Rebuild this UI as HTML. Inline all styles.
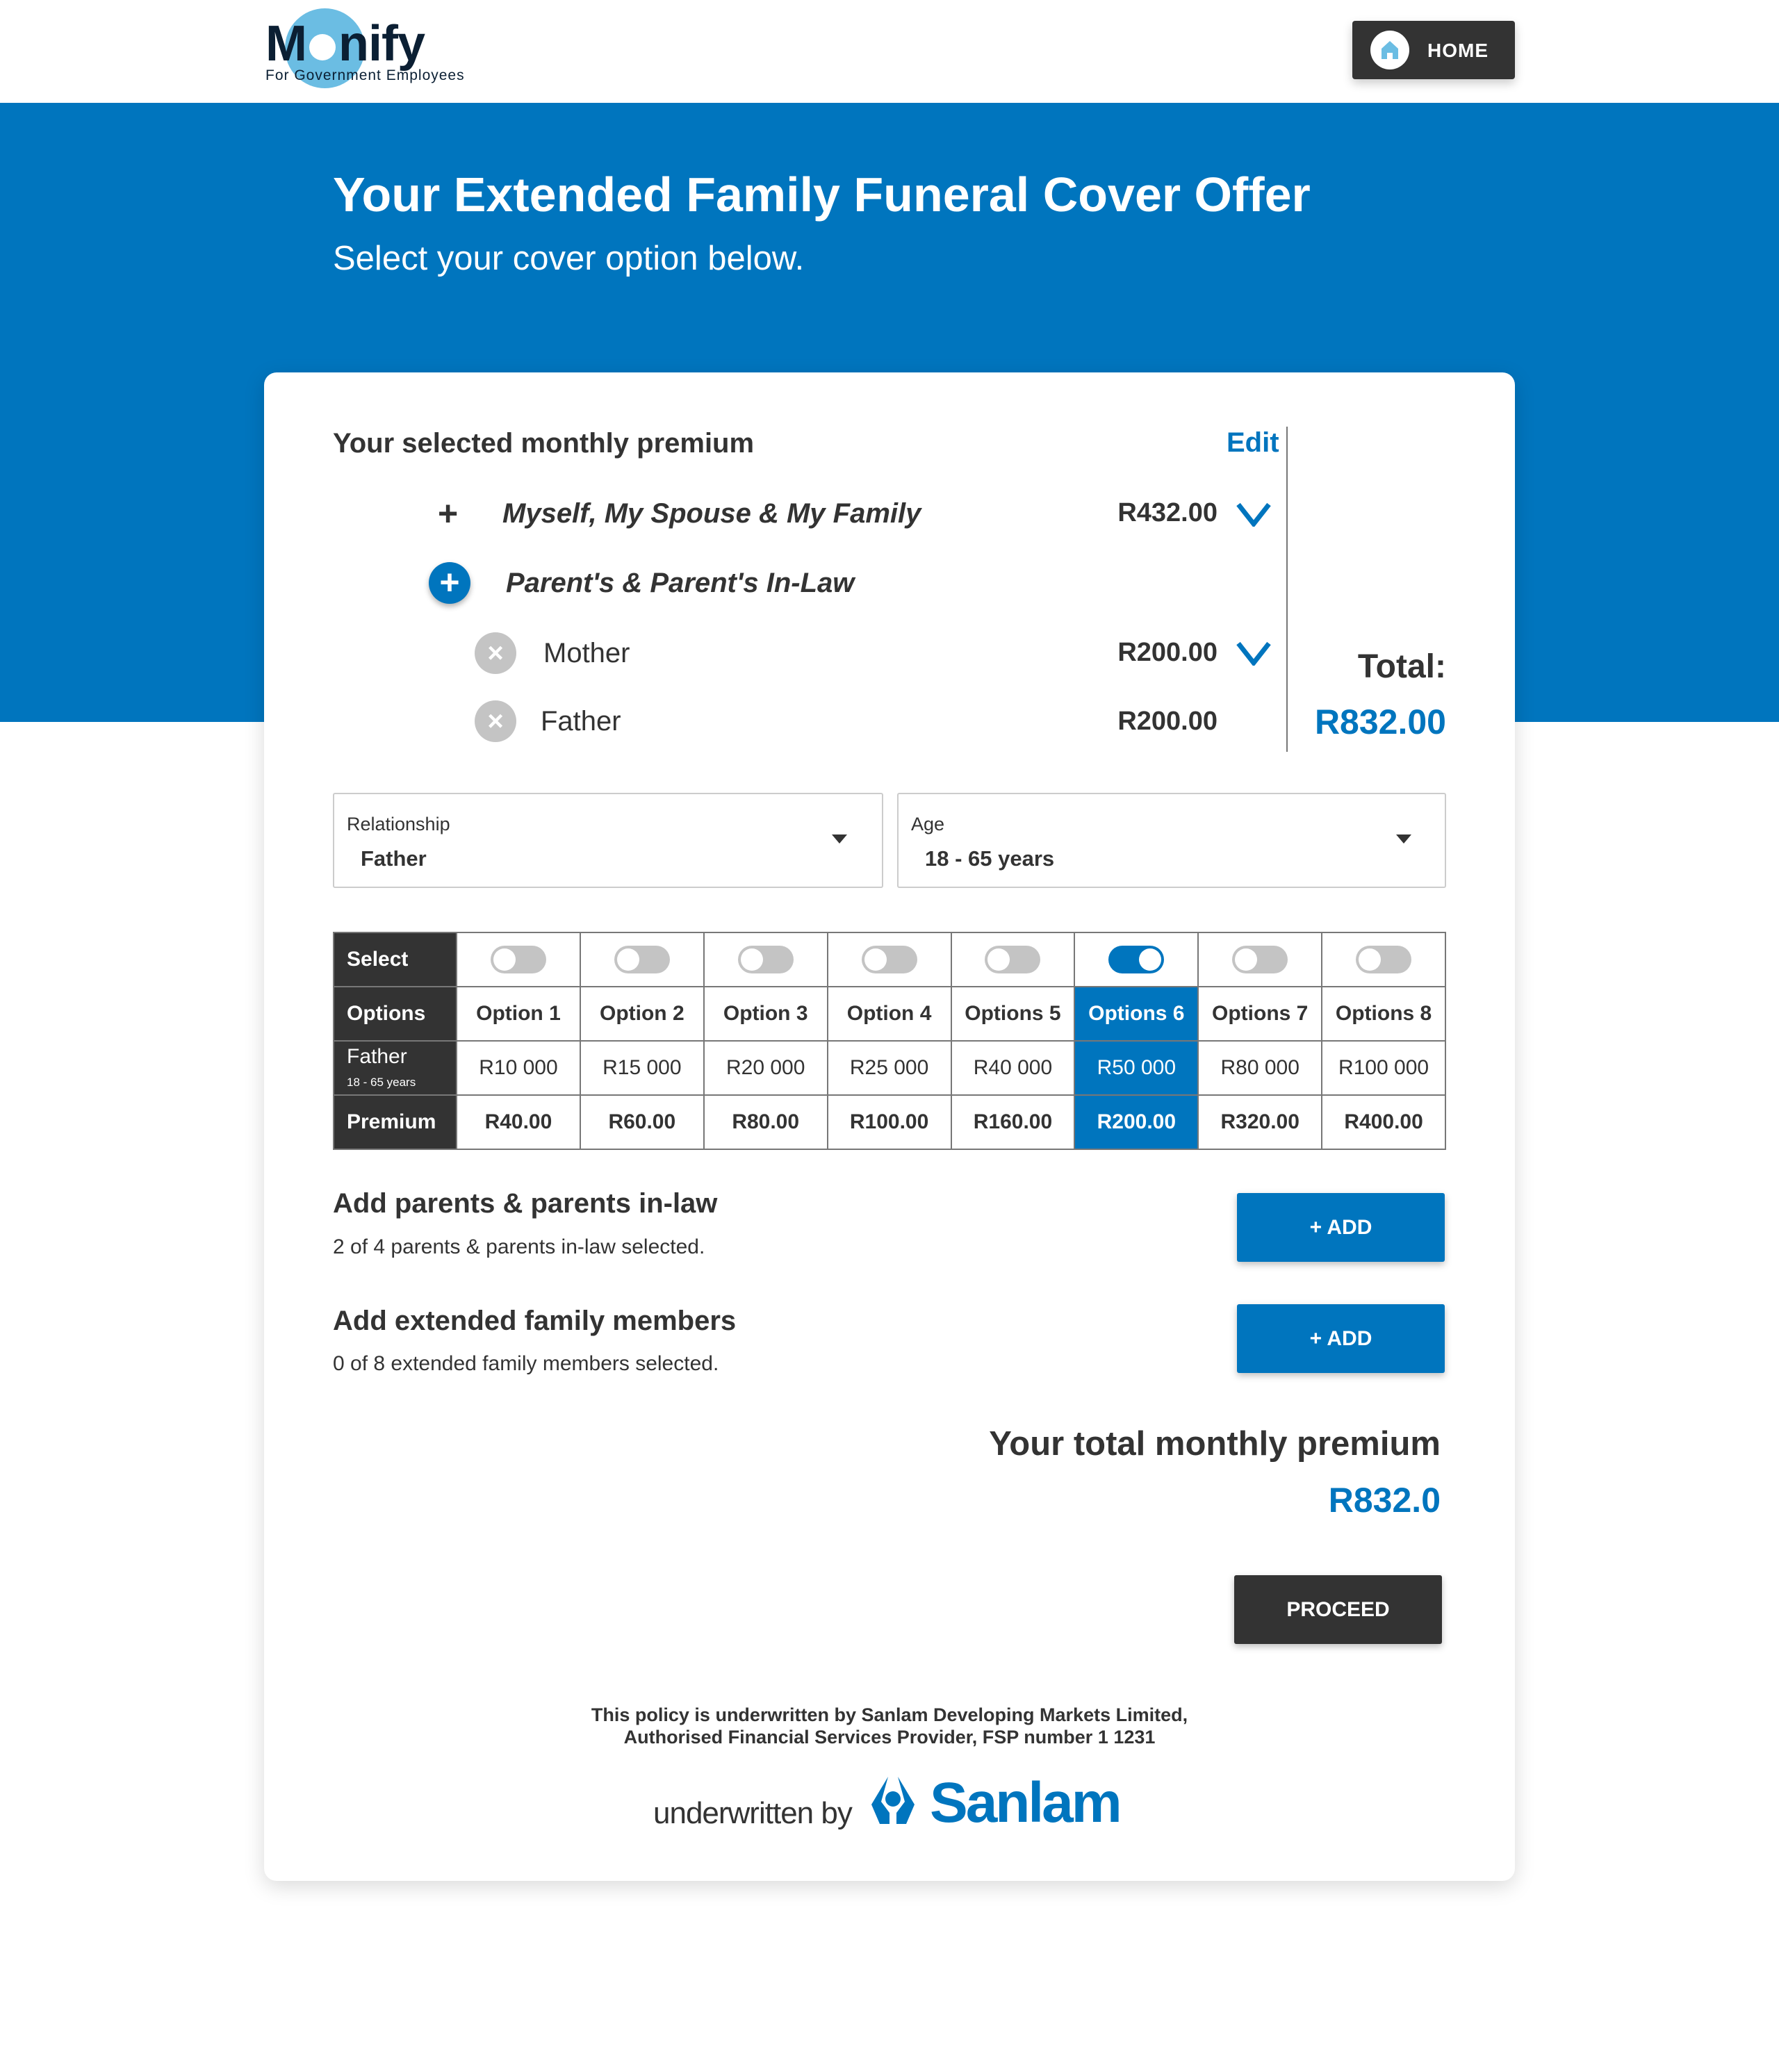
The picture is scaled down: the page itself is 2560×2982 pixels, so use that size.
<!DOCTYPE html>
<html><head><meta charset="utf-8"><style>
*{margin:0;padding:0;box-sizing:border-box}
body{width:2560px;height:2982px;background:#fff;font-family:"Liberation Sans",sans-serif;color:#333;position:relative;overflow:hidden}
.a{position:absolute;white-space:nowrap}
.band{position:absolute;left:0;top:148px;width:2560px;height:891px;background:#0075be}
.card{position:absolute;left:380px;top:536px;width:1800px;height:2171px;background:#fff;border-radius:18px;box-shadow:0 8px 30px rgba(0,0,0,.15)}
.blue{color:#0075be}
table{position:absolute;left:479px;top:1341px;width:1602px;border-collapse:collapse;font-size:30px;table-layout:fixed}
td{border:2px solid #777;height:78px;text-align:center;color:#333}
td.h{background:#333;color:#fff;text-align:left;padding-left:18px;font-weight:bold}
td.s{background:#0075be;color:#fff}
.tg{display:inline-block;width:80px;height:40px;border-radius:20px;background:#c4c4c4;position:relative;vertical-align:middle}
.tg:after{content:"";position:absolute;left:4px;top:4px;width:32px;height:32px;border-radius:50%;background:#fff}
.tg.on{background:#0075be}.tg.on:after{left:44px}
.btn{position:absolute;display:flex;align-items:center;justify-content:center;color:#fff;font-weight:bold;font-size:30px;box-shadow:0 4px 10px rgba(0,0,0,.25);border-radius:3px}
.sel{position:absolute;top:1141px;height:137px;border:2px solid #ccc;border-radius:3px}
.x{position:absolute;width:60px;height:60px;border-radius:50%;background:#c4c4c4;color:#fff;font-size:40px;font-weight:bold;text-align:center;line-height:60px}
</style></head><body>
<div class="a" style="left:410px;top:12px;width:115px;height:115px;border-radius:50%;background:#6bbde3"></div>
<div class="a" style="left:382px;top:22px;font-size:72px;font-weight:bold;color:#0b1f33;letter-spacing:-1px">M<span style="display:inline-block;width:38px;height:38px;border-radius:50%;background:#fff;margin:0 4px"></span>nify</div>
<div class="a" style="left:382px;top:97px;font-size:21px;color:#0b1f33;letter-spacing:1px">For Government Employees</div>
<div class="a" style="left:1946px;top:30px;width:234px;height:84px;background:#333;border-radius:4px;box-shadow:0 6px 14px rgba(0,0,0,.2)">
<div class="a" style="left:26px;top:14px;width:56px;height:56px;border-radius:50%;background:#fff"><svg width="56" height="56" viewBox="0 0 56 56"><path d="M16 26 L28 15 L40 26 V41 H32 V32 H24 V41 H16Z" fill="#6bbde3"/></svg></div>
<div class="a" style="left:108px;top:27px;color:#fff;font-size:28px;font-weight:bold;letter-spacing:1px">HOME</div></div>
<div class="band"></div>
<div class="a" style="left:479px;top:240px;font-size:70px;font-weight:bold;color:#fff">Your Extended Family Funeral Cover Offer</div>
<div class="a" style="left:479px;top:344px;font-size:49px;color:#fff">Select your cover option below.</div>
<div class="card"></div>
<div class="a" style="left:479px;top:616px;font-size:40px;font-weight:bold">Your selected monthly premium</div>
<div class="a blue" style="left:1765px;top:615px;font-size:40px;font-weight:bold">Edit</div>
<div class="a" style="left:1851px;top:614px;width:2px;height:468px;background:#777"></div>
<div class="a" style="left:630px;top:710px;font-size:50px;font-weight:bold">+</div>
<div class="a" style="left:723px;top:717px;font-size:40px;font-weight:bold;font-style:italic">Myself, My Spouse &amp; My Family</div>
<div class="a" style="right:808px;top:717px;font-size:38px;font-weight:bold">R432.00</div>
<svg class="a" style="left:1778px;top:722px" width="52" height="36"><path d="M4 4 L26 32 L48 4" stroke="#0075be" stroke-width="7" fill="none"/></svg>
<div class="a" style="left:617px;top:809px;width:60px;height:60px;border-radius:50%;background:#0075be;color:#fff;font-size:50px;font-weight:bold;text-align:center;line-height:58px;box-shadow:0 4px 8px rgba(0,0,0,.3)">+</div>
<div class="a" style="left:728px;top:817px;font-size:40px;font-weight:bold;font-style:italic">Parent's &amp; Parent's In-Law</div>
<div class="x" style="left:683px;top:910px">×</div>
<div class="a" style="left:782px;top:918px;font-size:40px">Mother</div>
<div class="a" style="right:808px;top:918px;font-size:38px;font-weight:bold">R200.00</div>
<svg class="a" style="left:1778px;top:922px" width="52" height="36"><path d="M4 4 L26 32 L48 4" stroke="#0075be" stroke-width="7" fill="none"/></svg>
<div class="x" style="left:683px;top:1008px">×</div>
<div class="a" style="left:778px;top:1016px;font-size:40px">Father</div>
<div class="a" style="right:808px;top:1017px;font-size:38px;font-weight:bold">R200.00</div>
<div class="a" style="right:479px;top:932px;font-size:48px;font-weight:bold">Total:</div>
<div class="a blue" style="right:479px;top:1010px;font-size:50px;font-weight:bold">R832.00</div>
<div class="sel" style="left:479px;width:792px"><div class="a" style="left:18px;top:28px;font-size:27px">Relationship</div><div class="a" style="left:38px;top:75px;font-size:31px;font-weight:bold">Father</div><div class="a" style="left:716px;top:58px;border:11px solid transparent;border-top:13px solid #333"></div></div>
<div class="sel" style="left:1291px;width:790px"><div class="a" style="left:18px;top:28px;font-size:27px">Age</div><div class="a" style="left:38px;top:75px;font-size:31px;font-weight:bold">18 - 65 years</div><div class="a" style="left:716px;top:58px;border:11px solid transparent;border-top:13px solid #333"></div></div>
<table>
<colgroup><col style="width:177px"><col><col><col><col><col><col><col><col></colgroup>
<tr><td class="h">Select</td><td><span class="tg"></span></td><td><span class="tg"></span></td><td><span class="tg"></span></td><td><span class="tg"></span></td><td><span class="tg"></span></td><td><span class="tg on"></span></td><td><span class="tg"></span></td><td><span class="tg"></span></td></tr>
<tr style="font-weight:bold"><td class="h">Options</td><td>Option 1</td><td>Option 2</td><td>Option 3</td><td>Option 4</td><td>Options 5</td><td class="s">Options 6</td><td>Options 7</td><td>Options 8</td></tr>
<tr><td class="h" style="font-weight:normal;line-height:1.1">Father<br><span style="font-size:17px">18 - 65 years</span></td><td>R10 000</td><td>R15 000</td><td>R20 000</td><td>R25 000</td><td>R40 000</td><td class="s">R50 000</td><td>R80 000</td><td>R100 000</td></tr>
<tr style="font-weight:bold"><td class="h">Premium</td><td>R40.00</td><td>R60.00</td><td>R80.00</td><td>R100.00</td><td>R160.00</td><td class="s">R200.00</td><td>R320.00</td><td>R400.00</td></tr>
</table>
<div class="a" style="left:479px;top:1710px;font-size:40px;font-weight:bold">Add parents &amp; parents in-law</div>
<div class="a" style="left:479px;top:1778px;font-size:30px">2 of 4 parents &amp; parents in-law selected.</div>
<div class="btn" style="left:1780px;top:1717px;width:299px;height:99px;background:#0075be">+ ADD</div>
<div class="a" style="left:479px;top:1879px;font-size:40px;font-weight:bold">Add extended family members</div>
<div class="a" style="left:479px;top:1946px;font-size:30px">0 of 8 extended family members selected.</div>
<div class="btn" style="left:1780px;top:1877px;width:299px;height:99px;background:#0075be">+ ADD</div>
<div class="a" style="right:487px;top:2050px;font-size:49px;font-weight:bold">Your total monthly premium</div>
<div class="a blue" style="right:487px;top:2130px;font-size:50px;font-weight:bold">R832.0</div>
<div class="btn" style="left:1776px;top:2267px;width:299px;height:99px;background:#333">PROCEED</div>
<div class="a" style="left:0;width:2560px;top:2452px;text-align:center;font-size:27px;font-weight:bold;line-height:32px">This policy is underwritten by Sanlam Developing Markets Limited,<br>Authorised Financial Services Provider, FSP number 1 1231</div>
<div class="a" style="left:940px;top:2585px;font-size:44px;color:#333;letter-spacing:-1px">underwritten by</div>
<svg class="a" style="left:1250px;top:2555px" width="70" height="82" viewBox="0 0 70 82"><path d="M28 2 L4 42 L16 70 H30 V54 L18 38 Z M42 2 L66 42 L54 70 H40 V54 L52 38 Z" fill="#0075be"/><circle cx="35" cy="34" r="11" fill="#0075be"/></svg>
<div class="a blue" style="left:1338px;top:2548px;font-size:82px;font-weight:bold;letter-spacing:-3px">Sanlam</div>
</body></html>
